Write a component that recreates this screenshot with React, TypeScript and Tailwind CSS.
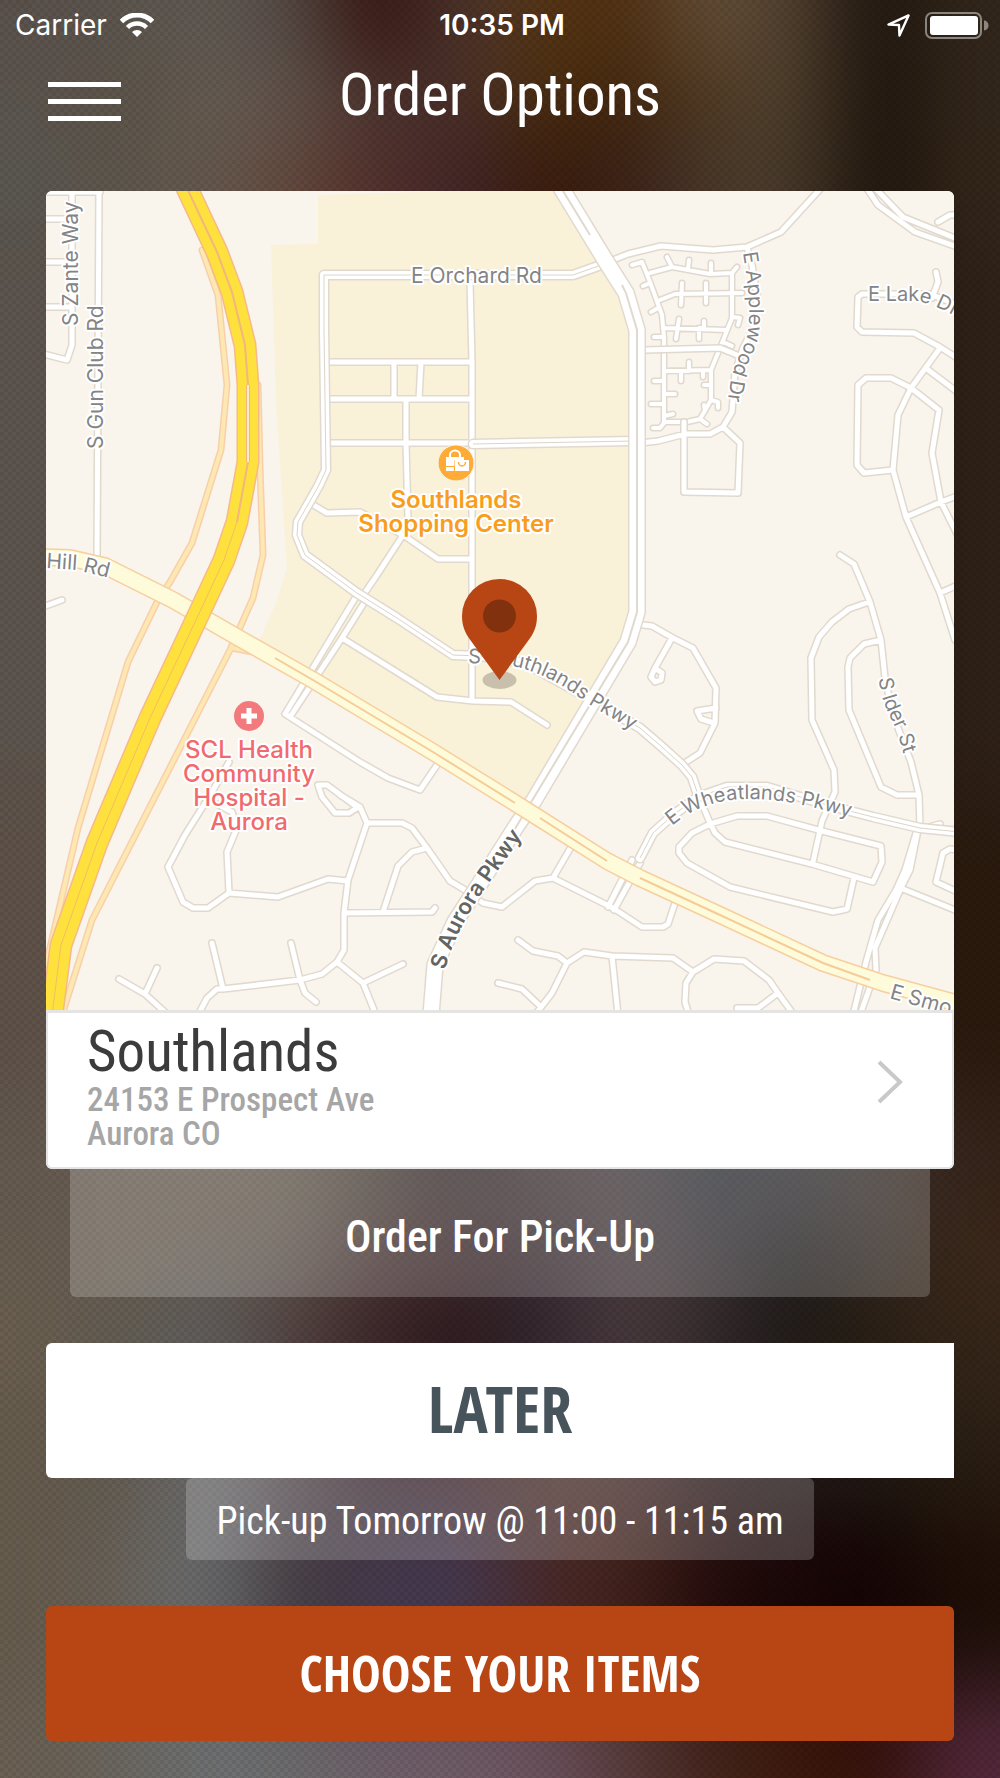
const BACKDROP_ROWS = [
  { y: -60, h: 120, c: ["5a514a", "5c5650", "615953", "544a45", "36100a", "4a3632", "573512", "4f2f12", "66503a", "524231", "1c130c", "33271b"] },
  { y: 60, h: 70, c: ["5c5650", "5c5245", "665d55", "635850", "4c3530", "4a302a", "4c3010", "42260c", "50391f", "524331", "1c120a", "33271b"] },
  { y: 130, h: 120, c: ["5a5650", "5e564c", "665a4f", "63483c", "53302a", "43262c", "3a1c0a", "3a2018", "4a3a2c", "4a3c2c", "1c120a", "33261a"] },
  { y: 250, h: 550, c: ["5d544d", "5d544d", "5d544d", "5d483c", "53302a", "43262c", "3a1c0a", "3a2018", "4a3a2c", "4a3c2c", "20150c", "2e2118"] },
  { y: 800, h: 300, c: ["5e5148", "655a50", "6a6054", "685e52", "4c4038", "372c2f", "453a3c", "4a3f41", "2f343a", "363338", "2c1c10", "2a1a0e"] },
  { y: 1100, h: 120, c: ["655a50", "695e53", "6a6054", "685e52", "4d443c", "372c2f", "453a3c", "4a3f41", "2f343a", "363338", "3c332f", "36241a"] },
  { y: 1220, h: 70, c: ["665c50", "6a6053", "665c52", "625850", "4a3735", "442c2e", "3a2c30", "4c3f42", "383236", "1f1e1e", "302824", "3c2818"] },
  { y: 1290, h: 110, c: ["6a5f50", "605a52", "5f5f5f", "51413f", "3c2427", "2a171b", "2f2630", "4c3c3f", "352a2c", "1e1816", "2a1e12", "35261a"] },
  { y: 1400, h: 110, c: ["645a4c", "625a50", "6d6e70", "584c4f", "3c2a2e", "40242a", "4c342c", "4a3030", "2f1f20", "231a1a", "201b15", "2a1e12"] },
  { y: 1510, h: 180, c: ["665b4d", "68625a", "6c6f72", "453d42", "45394c", "453a52", "4a2a2a", "43221a", "240c0c", "1a0606", "140404", "1e0f08"] },
  { y: 1690, h: 150, c: ["6a6053", "6a6660", "6e7173", "6c6c6c", "6f606a", "705c66", "6c5460", "583c3c", "44241c", "3d1a0b", "330f08", "52283a"] },
];

function Backdrop() {
  return (
    <svg className="absolute inset-0 -z-10 h-full w-full" viewBox="0 0 1000 1778" preserveAspectRatio="none" aria-hidden="true">
      <defs>
        <filter id="soft" filterUnits="userSpaceOnUse" x="-300" y="-300" width="1600" height="2400" colorInterpolationFilters="sRGB">
          <feGaussianBlur stdDeviation="42" />
        </filter>
        <pattern id="mesh" width="8" height="8" patternUnits="userSpaceOnUse">
          <rect width="4" height="4" fill="#000" opacity="0.07" />
          <rect x="4" y="4" width="4" height="4" fill="#000" opacity="0.07" />
        </pattern>
      </defs>
      <rect width="1000" height="1778" fill="#453830" />
      <g filter="url(#soft)">
        {BACKDROP_ROWS.map((row) =>
          row.c.map((c, i) => (
            <rect
              key={`${row.y}-${i}`}
              x={i === 0 ? -220 : i * 83.33}
              y={row.y - (row.y < 0 ? 120 : 0)}
              width={i === 0 || i === 11 ? 304 : 85}
              height={row.h + (row.y < 0 ? 121 : row.y === 1690 ? 120 : 1)}
              fill={`#${c}`}
            />
          )),
        )}
      </g>
      <rect width="1000" height="1778" fill="url(#mesh)" />
    </svg>
  );
}

const LANES = [
  "M632,265 L642,262 L650,282 L662,315 L664,338 L664,423 L660,428 L653,428",
  "M664,422 L687,422 L700,419 L711,400 L711,370 L720,348 L728,328 L732,318 L732,273 L710,274 L672,267 L650,273",
  "M672,267 L667,257 M688,269 L689,260 M711,274 L711,263 M732,273 L737,267",
  "M660,300 L675,294 L742,293 M682,283 L681,305 M706,283 L706,303",
  "M664,328 L727,330 M679,319 L676,339 M704,321 L704,328 L699,328 L699,339",
  "M664,371 L711,370 M689,362 L689,371 M681,371 L681,381 M703,371 L703,377 M711,385 L704,385",
  "M664,337 L654,337 M664,381 L654,381 M664,404 L651,404 M664,394 L675,394 M664,416 L673,414 M650,283 L643,286 M658,308 L651,312",
  "M711,400 L718,402 L718,408 M704,405 L705,411 M700,419 L707,424 M732,317 L740,318 L738,325 M723,342 L732,346",
];

const STREETS = [
  "M40,192 L100,192 M72,192 L72,345 L67,360 L40,353 M40,219 L72,219 M40,262 L72,262 M40,307 L72,307",
  "M99,186 L97,558",
  "M40,608 L62,600",
  "M324,362 L472,362 M324,399 L472,399 M324,443 L473,443",
  "M394,362 L394,399 M421,362 L419,399 M406,399 L406,443 L408,518",
  "M470,282 L472,362 L472,701",
  "M310,503 L327,513 L360,512 L403,535 L438,559 L472,559",
  "M403,535 L377,575 L362,597",
  "M357,595 L285,714 L360,762 L388,778 L420,790 L437,765",
  "M364,603 L342,638 L290,717",
  "M342,638 L437,697 L473,701 L511,702 L547,725",
  "M645,350 L720,348 L737,355",
  "M613,260 L628,254 L661,246 L713,250 L747,247 L781,232 L822,187",
  "M747,247 L752,265 L757,295 L755,325 L743,348 L735,372 L732,412 L723,427 L710,434 L685,434 L658,441 L640,443",
  "M684,422 L684,492 L738,493 L740,443 L723,427",
  "M866,187 L878,205 L915,232 L960,248 M874,187 L903,217 L960,240",
  "M938,222 L950,215 L960,215",
  "M960,360 L940,347 L914,333 L862,332 L857,327 L858,297 L862,294 L930,294 L960,306",
  "M932,298 L938,282 L936,272",
  "M940,348 L911,388 L898,415 L893,470 L906,517 L940,593 L955,640",
  "M927,369 L960,394",
  "M893,470 L864,473 L857,465 L858,385 L866,378 L891,378 L911,388 L939,410 L932,453 L941,502 L960,540",
  "M906,517 L941,502 L960,495 M940,593 L960,584",
  "M840,555 L854,564 L870,602 L881,640 L885,678 L893,715 L911,762 L919,795 L920,827",
  "M869,602 L849,609 L832,622 L819,637 L811,658 L812,720 L834,770 L835,792 L822,821 L813,862",
  "M881,640 L864,644 L850,658 L848,667 L849,710 L881,787 L897,795 L919,795",
  "M697,792 L710,823 L715,833 L725,842 L812,864 L873,882 L882,862 L881,846 L822,831 L767,816 L737,816 L710,824 L692,833 L679,847 L679,853 L687,863 L730,887 L833,912 L847,909 L854,878",
  "M643,625 L652,626 L673,638 L693,648 L716,688 L715,723 L700,753 L683,764",
  "M672,638 L655,668 L651,677 L655,682 L661,680 L662,673 L655,668",
  "M716,708 L697,711 L701,719 L714,723",
  "M229,762 L212,792 L185,835 L168,867 L183,902 L193,908 L208,908 L229,893 L278,897 L328,879 L348,881",
  "M229,893 L227,852 L237,828 L232,812 L217,804",
  "M357,807 L327,785 L318,785 L322,797 L335,813 L349,813 L357,808",
  "M340,795 L360,807 L367,823 L348,880 L344,913 L344,950 L337,962 L322,974 L300,980 L223,989 L217,989 L207,998 L198,1015",
  "M337,962 L363,983 L376,1015 M363,983 L403,964",
  "M212,943 L223,989 M291,943 L300,980 L305,993 L316,1002",
  "M119,979 L145,994 L168,1015 M145,994 L157,968",
  "M344,913 L432,912 L435,908 M383,912 L398,866 L412,852 L427,848",
  "M367,823 L402,823 L412,828 L427,848 L450,881 L465,890 L483,903 L502,907 L535,881 L553,878 L571,847",
  "M553,878 L613,908 L642,927 L663,927 L668,924 L675,903",
  "M608,907 L632,860 M614,910 L640,863",
  "M518,940 L533,951 L558,956 L567,963 L584,952 L612,956 L673,958 L693,972 L714,959 L744,961 L769,980 L778,993 L794,1015",
  "M778,993 L758,1008 L737,1008 M693,972 L686,983 L685,1002 L689,1015",
  "M567,963 L552,993 L535,1015 M498,983 L522,989 L540,1006 M612,956 L618,1015",
  "M917,830 L905,870 L896,890 L878,920 L866,962 L853,1015",
  "M918,830 L910,870 L901,888 L875,948 L876,970 L860,1015 M918,830 L940,824",
  "M898,887 L960,912",
  "M960,850 L950,849 L943,853 L936,882 L960,893",
];

const AVENUES = [
  "M604,264 L573,275 L324,275 L324,330 L326,470 L318,487 L298,522 L297,535 L305,555 L357,593 L397,618 L453,655 L480,656 L525,663 L590,699 L640,728 L662,747 L682,765 L692,777 L697,792",
  "M473,444 L634,441",
  "M640,858 L653,833 L673,815 L698,797 L727,787 L767,787 L827,805 L873,817 L920,828 L960,832",
];

const PARKWAY = "M560,186 L607,263 L626,293 L637,330 L637,612 L628,642 L533,802 L517,825 L477,888 L455,922 L435,965 L431,1015";
const HILL_ROAD = "M40,557 L70,558 L105,566 L173,600 L237,637 L313,680 L433,752 L523,808 L607,861 L640,878 L720,915 L823,963 L883,983 L960,1004";
const HIGHWAY = "M186,186 L217,252 L232,292 L245,345 L248,385 L248,462 L237,522 L224,560 L203,605 L150,718 L97,843 L61,945 L52,1015";
const RAMPS = [
  "M202,250 L218,295 L227,385 L221,450 L192,543 L170,582 L158,600 L128,662 L78,828 L46,965",
  "M258,385 L260,468 L263,555 L253,598 L230,650 L92,920 L62,1015",
  "M232,648 L253,652",
];

function Roads({ paths, width, fill, edge }: { paths: string[]; width: number; fill: string; edge: string }) {
  const d = paths.join(" ");
  return (
    <g fill="none" strokeLinejoin="round" strokeLinecap="round">
      <path d={d} stroke={edge} strokeWidth={width + 3} />
      <path d={d} stroke={fill} strokeWidth={width} />
    </g>
  );
}

const STRAIGHT_LABELS = [
  { id: "zante", d: "M78,326 L78,190", text: "S Zante Way" },
  { id: "gun", d: "M103,449 L103,290", text: "S Gun Club Rd" },
  { id: "hill", d: "M46,568 L77,570 L125,582", text: "Hill Rd" },
  { id: "orchard", d: "M411,283 L560,283", text: "E Orchard Rd" },
  { id: "smoky", d: "M889,998 L970,1021", text: "E Smo" },
];

const CURVED_LABELS = [
  { id: "applewood", d: "M743,253 C748,285 754,325 743,348 C732,370 729,380 726,425", text: "E Applewood Dr" },
  { id: "lake", d: "M868,301 L915,301 Q935,303 970,325", text: "E Lake Dr" },
  { id: "ider", d: "M879,678 C881,705 891,715 898,735 L910,775", text: "S Ider St" },
  { id: "southlands", d: "M468,663 L495,664 C530,666 560,682 590,705 L655,744", text: "S Southlands Pkwy" },
  { id: "wheatlands", d: "M672,826 C695,806 722,799 748,799 C790,799 815,808 875,824", text: "E Wheatlands Pkwy" },
];

function RoadLabels({ labels, size }: { labels: { id: string; d: string; text: string }[]; size: number }) {
  return (
    <g fontSize={size} fill="#838485" stroke="#fff" strokeWidth="4" strokeLinejoin="round" paintOrder="stroke">
      {labels.map((l) => (
        <g key={l.id}>
          <path id={`label-${l.id}`} d={l.d} fill="none" stroke="none" />
          <text>
            <textPath href={`#label-${l.id}`}>{l.text}</textPath>
          </text>
        </g>
      ))}
    </g>
  );
}

function StoreMap() {
  return (
    <svg
      className="block h-auto w-full rounded-t-md"
      viewBox="46 191 908 819"
      role="img"
      aria-label="Map of the area around Southlands"
      fontFamily='Inter, "Liberation Sans", sans-serif'
    >
      <rect x="46" y="191" width="908" height="819" fill="#f9f4ec" />
      <path d="M318,195 L555,188 L612,270 L637,330 L637,610 L627,645 L527,800 L255,650 L276,603 L287,568 L283,510 L276,400 L271,245 L318,244 Z" fill="#faf1d9" />

      <Roads paths={LANES} width={4} fill="#fff" edge="#e1d9ce" />
      <Roads paths={STREETS} width={5} fill="#fff" edge="#e1d9ce" />
      <Roads paths={AVENUES} width={8} fill="#fff" edge="#e1d9ce" />
      <path d={AVENUES.join(" ")} fill="none" stroke="#dcd4c8" strokeWidth="1" />
      <Roads paths={[PARKWAY]} width={15} fill="#fff" edge="#e1d9ce" />
      <path d="M560,186 L590,235 M622,285 L626,293 L637,330 L637,612 L628,642 L510,837" fill="none" stroke="#e1d9ce" strokeWidth="2" />

      <Roads paths={RAMPS} width={4} fill="#fee8b2" edge="#f8cfab" />
      <Roads paths={[HILL_ROAD]} width={15} fill="#fdfbd9" edge="#f7cf9f" />
      <path d="M275,658 L313,680 L433,752 L515,803 M540,818 L607,861 M640,878 L720,915 L823,963 L870,980" fill="none" stroke="#f6cb98" strokeWidth="2" />
      <Roads paths={[HIGHWAY]} width={20} fill="#ffe13d" edge="#f6b98a" />
      <path d={HIGHWAY} fill="none" stroke="#f0bf62" strokeWidth="1" />
      <path d="M186,186 L217,252 L232,292 L245,345 L248,385 L248,462 L237,522" fill="none" stroke="#f2b77c" strokeWidth="2" />
      <path d="M248,385 L248,462" fill="none" stroke="#f2b77c" strokeWidth="4" />
      <path d="M248,385 L248,462" fill="none" stroke="#fbeed0" strokeWidth="2" />

      <RoadLabels labels={STRAIGHT_LABELS} size={21} />
      <RoadLabels labels={CURVED_LABELS} size={20} />
      <g fill="#636464" fontWeight="600" fontSize="22" stroke="#fff" strokeWidth="4" strokeLinejoin="round" paintOrder="stroke">
        <path id="label-aurora" d="M445,970 Q453,938 479,897 L535,818" fill="none" stroke="none" />
        <text>
          <textPath href="#label-aurora">S Aurora Pkwy</textPath>
        </text>
      </g>

      <circle cx="456" cy="463" r="18" fill="#ffab38" stroke="#fdf6e6" strokeWidth="1" />
      <path d="M450,457 v-2 a5,4.5 0 0 1 10,0 v2" fill="none" stroke="#fff" strokeWidth="2" />
      <path d="M446,457 h18 v3 h-9.500 v6 h-8.500 Z M446,467 h8 v4 h-8 Z" fill="#fff" />
      <path d="M455,460 h14 v11 h-14 Z" fill="#fff" />
      <path d="M458.500,462 a3.500,4 0 0 0 7,0" fill="none" stroke="#ffab38" strokeWidth="1.500" />
      <g textAnchor="middle" fontSize="24" stroke="#fff" strokeWidth="4" strokeLinejoin="round" paintOrder="stroke">
        <g fill="#f99d1c" fontWeight="600">
          <text x="456" y="508">Southlands</text>
          <text x="456" y="532">Shopping Center</text>
        </g>
        <g fill="#f16a6d" fontWeight="500">
          <text x="249" y="758">SCL Health</text>
          <text x="249" y="782">Community</text>
          <text x="249" y="806">Hospital -</text>
          <text x="249" y="830">Aurora</text>
        </g>
      </g>

      <circle cx="249" cy="716" r="15" fill="#f27a7c" />
      <path d="M249,708 v16 M241,716 h16" stroke="#fff" strokeWidth="5" />

      <ellipse cx="499.500" cy="680" rx="17" ry="9" fill="#000" opacity="0.2" />
      <path d="M499.500,680 L471,641 C465,633 462,626 462,616 A37.500,37 0 0 1 537,616 C537,626 534,633 528,641 Z" fill="#b84614" />
      <circle cx="499.500" cy="616" r="16.500" fill="#82310f" />
    </svg>
  );
}

function StatusBar() {
  return (
    <div className="grid h-[50px] grid-cols-3 items-center pr-[11px] pl-[15px] font-[Inter,'Liberation_Sans',sans-serif] text-[28px] leading-[30px]">
      <div className="flex items-center gap-[13px]">
        <span>Carrier</span>
        <svg className="h-6 w-[34px]" viewBox="0 0 34 24" fill="none" stroke="#fff" aria-label="Wi-Fi">
          <path d="M1.500,8.500 A22,22 0 0 1 32.500,8.500" strokeWidth="5" />
          <path d="M7.500,14.500 A13.500,13.500 0 0 1 26.500,14.500" strokeWidth="4.500" />
          <path d="M17,24 L12,19 A7,7 0 0 1 22,19 Z" fill="#fff" stroke="none" />
        </svg>
      </div>
      <time className="text-center font-semibold">10:35 PM</time>
      <div className="flex items-center justify-end gap-[15px]">
        <svg className="h-[23px] w-[23px]" viewBox="0 0 24 24" fill="none" stroke="#fff" strokeWidth="2.500" strokeLinejoin="round" aria-label="Location">
          <path d="M22.500,1.500 L13,22.500 L12.500,11.500 L1.500,11 Z" />
        </svg>
        <svg className="h-[27px] w-[64px]" viewBox="0 0 64 27" aria-label="Battery full">
          <rect x="1" y="1" width="55" height="25" rx="6" fill="none" stroke="#fff" strokeOpacity="0.45" strokeWidth="2" />
          <rect x="5" y="4" width="48" height="19" rx="3" fill="#fff" />
          <path d="M59,8.500 a4.500,5 0 0 1 0,10 Z" fill="#fff" opacity="0.45" />
        </svg>
      </div>
    </div>
  );
}

export default function App() {
  return (
    <div className="relative isolate min-h-screen overflow-hidden pb-9 font-['Roboto_Condensed','DejaVu_Sans_Condensed',sans-serif] text-white">
      <Backdrop />
      <StatusBar />

      <header className="grid grid-cols-[73px_1fr_73px] items-center px-12 pb-[51px]">
        <button type="button" aria-label="Open menu" className="mt-3 flex flex-col gap-3">
          <span className="h-[5px] w-full bg-white" />
          <span className="h-[5px] w-full bg-white" />
          <span className="h-[5px] w-full bg-white" />
        </button>
        <h1 className="text-center text-[59px] leading-[90px] font-normal">Order Options</h1>
      </header>

      <main className="px-[46px]">
        <section className="overflow-hidden rounded-md bg-white">
          <StoreMap />
          <button type="button" className="flex w-full items-center justify-between rounded-b-md border-2 border-t-3 border-[#e4e4e4] pr-[49px] pb-4 pl-[39px] text-left">
            <span className="flex flex-col pt-2">
              <span className="text-[57px] leading-[62px] text-[#3c3c3c]">Southlands</span>
              <span className="text-[33px] leading-[34px] font-medium text-[#a6a6a6]">24153 E Prospect Ave</span>
              <span className="text-[33px] leading-[34px] font-medium text-[#a6a6a6]">Aurora CO</span>
            </span>
            <svg className="h-[44px] w-[26px]" viewBox="0 0 26 44" fill="none" stroke="#c9c9c9" strokeWidth="4" aria-hidden="true">
              <path d="M2,2 L23,22 L2,42" />
            </svg>
          </button>
        </section>

        <button type="button" className="mx-auto block w-[calc(100%-48px)] rounded-b-md bg-white/20 pt-11 pb-9 text-[44px] leading-[48px] font-medium">
          Order For Pick-Up
        </button>

        <button type="button" className="mt-[46px] block w-full rounded-l-md bg-white pt-[26px] pb-[30px] font-['Open_Sans_Condensed','Roboto_Condensed',sans-serif] text-[64px] leading-[79px] font-bold text-[#48545c]">
          LATER
        </button>
        <p className="mx-auto w-fit rounded-md bg-white/20 px-[30px] pt-5 pb-4 text-center text-[38px] leading-[46px]">Pick-up Tomorrow @ 11:00 - 11:15 am</p>

        <button type="button" className="mt-[46px] block w-full rounded-md bg-[#b84614] py-[28px] font-['Open_Sans_Condensed','Roboto_Condensed',sans-serif] text-[50px] leading-[79px] font-bold">
          CHOOSE YOUR ITEMS
        </button>
      </main>
    </div>
  );
}
